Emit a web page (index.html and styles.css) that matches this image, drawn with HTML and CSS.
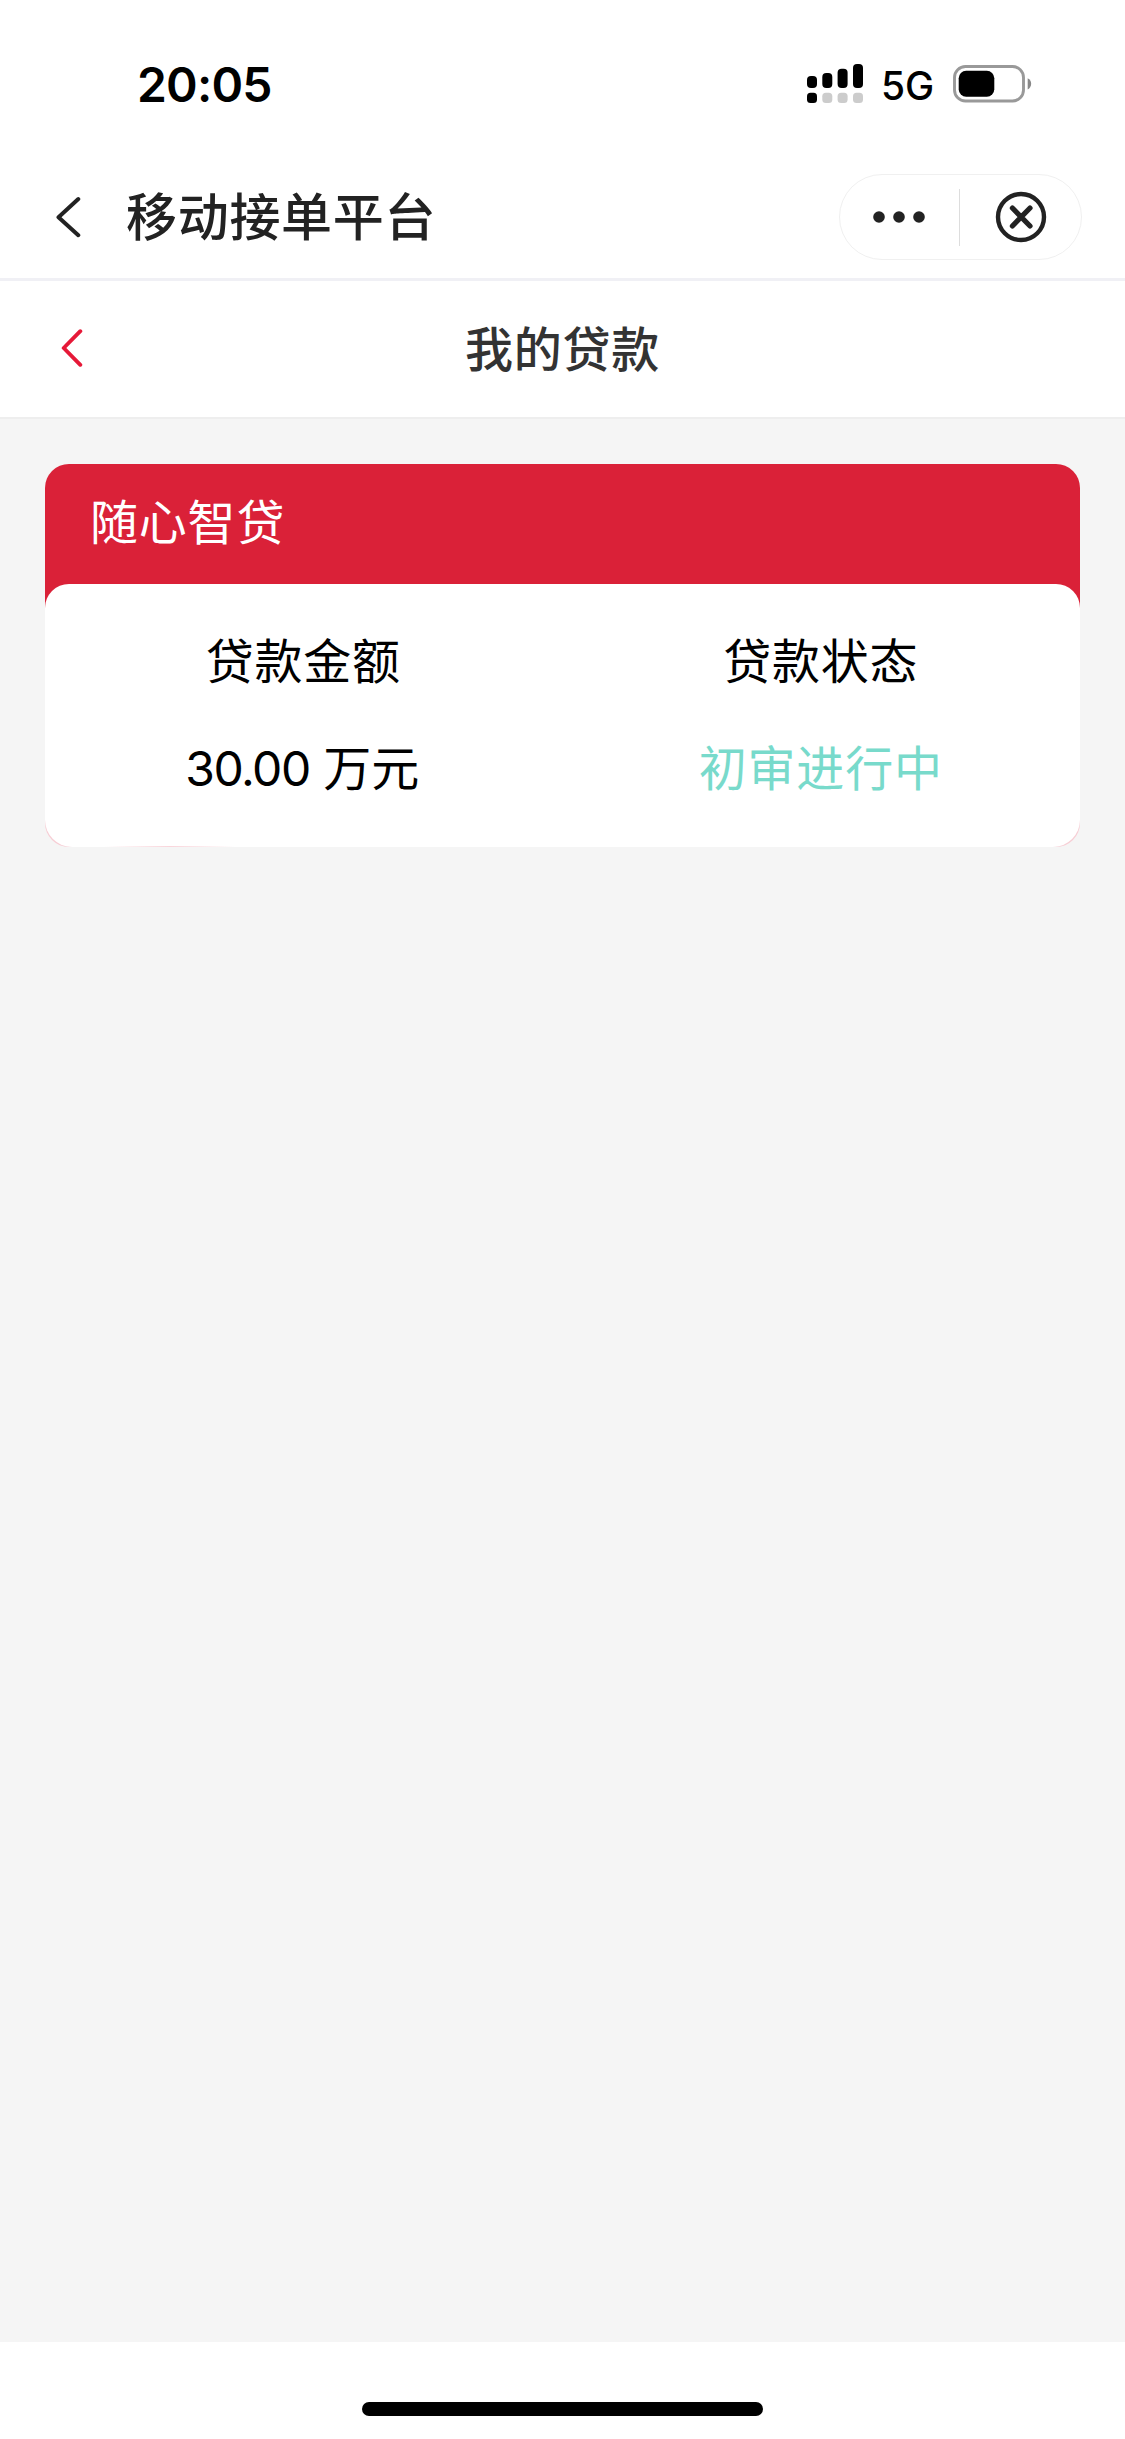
FILE: index.html
```html
<!DOCTYPE html>
<html lang="zh-CN">
<head>
<meta charset="utf-8">
<title>我的贷款</title>
<link rel="stylesheet" href="styles.css">
</head>
<body>
<div class="status-bar">
  <span class="time">20:05</span>
  <div class="indicators">
    <svg class="signal" width="56" height="40" viewBox="0 0 56 40">
      <rect x="0" y="12" width="10" height="12" rx="4"/>
      <rect x="15.3" y="9" width="10" height="15" rx="4"/>
      <rect x="30.6" y="4.7" width="10" height="19.3" rx="4"/>
      <rect x="46" y="0" width="10" height="24" rx="4"/>
      <rect x="0" y="28.7" width="10" height="10.3" rx="3.5"/>
      <g fill="#ccc"><rect x="15.3" y="28.7" width="10" height="10.3" rx="3.5"/><rect x="30.6" y="28.7" width="10" height="10.3" rx="3.5"/><rect x="46" y="28.7" width="10" height="10.3" rx="3.5"/></g>
    </svg>
    <span class="network">5G</span>
    <svg class="battery" width="79" height="38" viewBox="0 0 79 38">
      <rect x="1.5" y="1.5" width="69" height="34.5" rx="11" fill="none" stroke="#999" stroke-width="2.9"/>
      <rect x="5.7" y="5.7" width="35.6" height="26" rx="7.5"/>
      <path d="M74.7 13.2c4.6 1.8 4.6 9.4 0 11.2z" fill="#888"/>
    </svg>
  </div>
</div>
<header class="app-nav">
  <svg class="app-back" width="26" height="42" viewBox="0 0 26 42"><path d="M22.3 3 2.5 21.2l19.8 18" fill="none" stroke="#222" stroke-width="4" stroke-linecap="round" stroke-linejoin="round"/></svg>
  <h1 class="app-title">移动接单平台</h1>
  <div class="capsule">
    <svg class="more" width="52" height="12" viewBox="0 0 52 12" fill="#222"><circle cx="6" cy="6" r="5.8"/><circle cx="26" cy="6" r="5.8"/><circle cx="46" cy="6" r="5.8"/></svg>
    <span class="divider"></span>
    <svg class="close" width="52" height="52" viewBox="0 0 52 52" fill="none" stroke="#222"><circle cx="26" cy="26" r="23" stroke-width="4.4"/><path d="m17.4 17 17.6 18M35 17 17.4 35" stroke-width="5.2" stroke-linecap="round"/></svg>
  </div>
</header>
<div class="page-header">
  <svg class="page-back" width="22" height="38" viewBox="0 0 22 38"><path d="M19.3 2.2 2.7 19l16.6 16.8" fill="none" stroke="#e61938" stroke-width="3.9" stroke-linecap="round" stroke-linejoin="round"/></svg>
  <h2 class="page-title">我的贷款</h2>
</div>
<main class="content">
  <section class="card">
    <div class="card-head">随心智贷</div>
    <div class="card-body">
      <div class="column"><span class="label">贷款金额</span><span class="value"><span class="amount">30.00</span> 万元</span></div>
      <div class="column"><span class="label">贷款状态</span><span class="value pending">初审进行中</span></div>
    </div>
  </section>
</main>
<footer class="home-area"><div class="home-indicator"></div></footer>
</body>
</html>
```
FILE: styles.css
```css
* { box-sizing: border-box; }
body {
  margin: 0;
  height: 2439px;
  display: flex;
  flex-direction: column;
  background: #fff;
  color: #000;
  font-family: Inter, "Noto Sans CJK SC", sans-serif;
}
svg { display: block; flex: none; }
h1, h2 { margin: 0; font-weight: 500; font-family: "Noto Sans CJK SC", sans-serif; white-space: nowrap; }
.status-bar {
  height: 157px;
  padding: 54px 93px 0 137px;
  display: flex;
  justify-content: space-between;
}
.time { font-size: 48px; line-height: 61px; font-weight: 600; letter-spacing: -.8px; }
.indicators { display: flex; align-items: flex-start; }
.signal { margin-top: 10px; }
.network { width: 90px; padding-left: 18px; font-size: 39px; line-height: 63px; font-weight: 500; }
.battery { margin-top: 11px; }
.app-nav {
  height: 124px;
  padding: 0 43px 1px 56px;
  display: flex;
  align-items: center;
  border-bottom: 3px solid #f0f0f5;
}
.app-title { margin-left: 44px; padding-bottom: 6px; font-size: 51px; line-height: 76px; letter-spacing: .7px; color: #222; }
.capsule {
  width: 243px;
  height: 86px;
  margin-left: auto;
  padding: 0 34px 0 33px;
  display: flex;
  align-items: center;
  border: 1.5px solid #f0f0f0;
  border-radius: 43px;
}
.divider { width: 1px; height: 57px; margin: 0 35px 0 34px; background: #ddd; }
.page-header {
  height: 138px;
  padding: 0 61px 2px;
  display: grid;
  grid-template-columns: 22px 1fr 22px;
  align-items: center;
  border-bottom: 2px solid #eee;
}
.page-title { padding-bottom: 5px; text-align: center; font-size: 48px; line-height: 70px; letter-spacing: .8px; color: #333; }
.content { flex: 1; padding: 45px; background: #f5f5f5; }
.card { border-radius: 24px; overflow: hidden; background: linear-gradient(#da2138 150px, #f7cdd4 150px); }
.card-head {
  height: 120px;
  padding-left: 45px;
  font-size: 48px;
  line-height: 118px;
  letter-spacing: .8px;
  color: #fff;
}
.card-body {
  height: 263px;
  padding-top: 43px;
  display: grid;
  grid-template-columns: 1fr 1fr;
  border-radius: 24px 24px 27px 27px;
  background: linear-gradient(90deg, #fff, #f9d5db, #fff) 60px 100% / 130px 1px no-repeat #fff;
}
.column { display: flex; flex-direction: column; gap: 37px; align-items: center; font-size: 48px; line-height: 70px; }
.label, .pending { letter-spacing: .8px; margin-right: 1px; }
.value { margin-right: 3px; }
.amount { letter-spacing: -1.5px; }
.pending { margin-right: 1px; color: #78dacb; }
.home-area { height: 97px; padding-top: 60px; }
.home-indicator { width: 401px; height: 14px; margin: 0 auto; border-radius: 7px; background: #000; }
```
